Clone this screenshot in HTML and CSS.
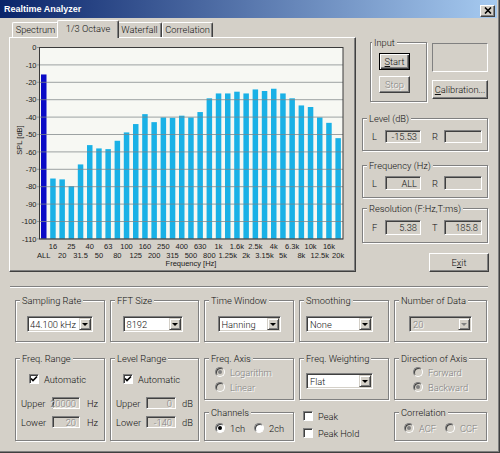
FILE: index.html
```html
<!DOCTYPE html>
<html>
<head>
  <meta charset="utf8" />
  <title>Realtime Analyzer</title>
  <link rel="stylesheet" href="styles.css">
</head>
<body>
  <div class="window">
    <div class="titlebar">
      <span class="titlebar__text">Realtime Analyzer</span>
      <span class="titlebar__close">
        <svg width="8" height="7" viewBox="0 0 8 7"><path d="M1 0.5 L7 6.5 M7 0.5 L1 6.5" stroke="#000" stroke-width="1.6"/></svg>
      </span>
    </div>
    <div class="client">
      <div class="top">
        <div class="tabctl">
          <div class="tabs">
            <div class="tab tab--spectrum">Spectrum</div>
            <div class="tab tab--active">1/3 Octave</div>
            <div class="tab tab--waterfall">Waterfall</div>
            <div class="tab tab--corr">Correlation</div>
          </div>
          <div class="tabpanel">
            <svg class="chart" width="345" height="233" viewBox="10 38 345 233"></svg>
          </div>
        </div>

        <div class="side">
          <div class="inputrow">
            <div class="group group--input">
              <span class="group__label">Input</span>
              <div class="btn btn--default btn--start"><u>S</u>tart</div>
              <div class="btn btn--disabled btn--stop">Stop</div>
            </div>
            <div class="inputrow__right">
              <div class="blank"></div>
              <div class="btn btn--calib"><u>C</u>alibration...</div>
            </div>
          </div>

          <div class="group group--level">
            <span class="group__label">Level (dB)</span>
            <div class="lr">
              <span class="lr__l">L</span>
              <div class="field field--l">-15.53</div>
              <span class="lr__r">R</span>
              <div class="field field--r"></div>
            </div>
          </div>

          <div class="group group--freq">
            <span class="group__label">Frequency (Hz)</span>
            <div class="lr">
              <span class="lr__l">L</span>
              <div class="field field--l">ALL</div>
              <span class="lr__r">R</span>
              <div class="field field--r"></div>
            </div>
          </div>

          <div class="group group--res">
            <span class="group__label">Resolution (F:Hz,T:ms)</span>
            <div class="lr">
              <span class="lr__l">F</span>
              <div class="field field--l">5.38</div>
              <span class="lr__r">T</span>
              <div class="field field--r">185.8</div>
            </div>
          </div>

          <div class="btn btn--exit">E<u>x</u>it</div>
        </div>
      </div>

      <div class="sep"></div>

      <div class="row1">
        <div class="group group--r1">
          <span class="group__label">Sampling Rate</span>
          <div class="combo combo--rate">44.100 kHz<span class="combo__btn"></span></div>
        </div>
        <div class="group group--r1">
          <span class="group__label">FFT Size</span>
          <div class="combo combo--fft">8192<span class="combo__btn"></span></div>
        </div>
        <div class="group group--r1">
          <span class="group__label">Time Window</span>
          <div class="combo combo--tw">Hanning<span class="combo__btn"></span></div>
        </div>
        <div class="group group--r1">
          <span class="group__label">Smoothing</span>
          <div class="combo combo--smooth">None<span class="combo__btn"></span></div>
        </div>
        <div class="group group--r1">
          <span class="group__label">Number of Data</span>
          <div class="combo combo--nod combo--disabled">20<span class="combo__btn"></span></div>
        </div>
      </div>

      <div class="row2">
        <div class="group group--range">
          <span class="group__label">Freq. Range</span>
          <div class="check check--fr"><span class="check__box check__box--on"><svg width="8" height="8" viewBox="0 0 8 8"><path d="M1 3.5 L3 5.5 L7 1.5" fill="none" stroke="#000" stroke-width="1.6"/></svg></span>Automatic</div>
          <div class="rng rng--first">
            <span class="rng__lbl">Upper</span>
            <div class="field field--dis field--fr">20000</div>
            <span class="rng__unit">Hz</span>
          </div>
          <div class="rng">
            <span class="rng__lbl">Lower</span>
            <div class="field field--dis field--fr">20</div>
            <span class="rng__unit">Hz</span>
          </div>
        </div>

        <div class="group group--range">
          <span class="group__label">Level Range</span>
          <div class="check check--lr"><span class="check__box check__box--on"><svg width="8" height="8" viewBox="0 0 8 8"><path d="M1 3.5 L3 5.5 L7 1.5" fill="none" stroke="#000" stroke-width="1.6"/></svg></span>Automatic</div>
          <div class="rng rng--first rng--lr">
            <span class="rng__lbl">Upper</span>
            <div class="field field--dis field--lvl">0</div>
            <span class="rng__unit">dB</span>
          </div>
          <div class="rng rng--lr">
            <span class="rng__lbl">Lower</span>
            <div class="field field--dis field--lvl">-140</div>
            <span class="rng__unit">dB</span>
          </div>
        </div>

        <div class="stack">
          <div class="group group--half">
            <span class="group__label">Freq. Axis</span>
            <div class="radio radio--dis radio--axis radio--first"><span class="radio__dot radio__dot--on"></span>Logarithm</div>
            <div class="radio radio--dis radio--axis"><span class="radio__dot"></span>Linear</div>
          </div>
          <div class="group group--low">
            <span class="group__label">Channels</span>
            <div class="radios">
              <div class="radio"><span class="radio__dot radio__dot--on"></span>1ch</div>
              <div class="radio radio--second"><span class="radio__dot"></span>2ch</div>
            </div>
          </div>
        </div>

        <div class="stack">
          <div class="group group--half">
            <span class="group__label">Freq. Weighting</span>
            <div class="combo combo--smooth combo--weight">Flat<span class="combo__btn"></span></div>
          </div>
          <div class="peaks">
            <div class="check"><span class="check__box"></span>Peak</div>
            <div class="check check--hold"><span class="check__box"></span>Peak Hold</div>
          </div>
        </div>

        <div class="stack">
          <div class="group group--half group--wide">
            <span class="group__label">Direction of Axis</span>
            <div class="radio radio--dis radio--dir radio--first"><span class="radio__dot"></span>Forward</div>
            <div class="radio radio--dis radio--dir"><span class="radio__dot radio__dot--on"></span>Backward</div>
          </div>
          <div class="group group--low group--wide">
            <span class="group__label">Correlation</span>
            <div class="radios radios--corr">
              <div class="radio radio--dis"><span class="radio__dot radio__dot--on"></span>ACF</div>
              <div class="radio radio--dis radio--second"><span class="radio__dot"></span>CCF</div>
            </div>
          </div>
        </div>
      </div>
    </div>
  </div>

  <script>
    const svg = document.querySelector('.chart');
    const NS = 'http://www.w3.org/2000/svg';
    // 1/3 octave levels, first one is the overall (ALL) level
    const vals = [-15.5,-75.3,-75.8,-79.7,-67.2,-56.1,-58,-58.4,-53.6,-48.8,-44,-38.3,-42.9,-40.2,-40.4,-39.2,-40.2,-37.1,-29.2,-26.4,-26.4,-25.4,-26.4,-24.1,-25,-23.7,-26.4,-29.2,-33.3,-34.2,-40.2,-43.3,-52.1];
    const bands = ['ALL','16','20','25','31.5','40','50','63','80','100','125','160','200','250','315','400','500','630','800','1k','1.25k','1.6k','2k','2.5k','3.15k','4k','5k','6.3k','8k','10k','12.5k','16k','20k'];

    function add(tag, attrs, text){
      const el = document.createElementNS(NS, tag);
      for (const k in attrs) el.setAttribute(k, attrs[k]);
      if (text) el.textContent = text;
      svg.appendChild(el);
      return el;
    }

    const top0 = 47.5, step = 17.4, bottom = 239;

    add('rect', {x: 39.5, y: top0, width: 303.5, height: bottom - top0, fill: '#f7f8f3'});

    vals.forEach((v, i) => {
      const y = top0 - v * step / 10;
      add('rect', {x: 41 + 9.2 * i, y: y, width: 5.5, height: bottom - y, fill: i === 0 ? '#0b0bc6' : '#1ab1e6'});
    });

    for (let k = 0; k <= 11; k++){
      const y = top0 + step * k;
      add('line', {x1: 37, x2: 343, y1: y, y2: y, stroke: '#7f8688', 'stroke-width': 1, opacity: 0.75});
      add('text', {x: 36.5, y: y + 2.6, 'text-anchor': 'end', class: 'chart__tick'}, k === 0 ? '0' : '-' + k * 10);
    }

    add('rect', {x: 39.5, y: top0, width: 303.5, height: bottom - top0, fill: 'none', stroke: '#3a3a3a'});

    bands.forEach((b, i) => {
      const x = 41 + 9.2 * i + 2.75;
      add('text', {x: x, y: i % 2 ? 248.7 : 257.7, 'text-anchor': 'middle', class: 'chart__tick'}, b);
    });

    add('text', {x: 191, y: 266, 'text-anchor': 'middle', class: 'chart__tick'}, 'Frequency  [Hz]');
    add('text', {x: 0, y: 0, 'text-anchor': 'middle', class: 'chart__tick', transform: 'translate(21.5 140) rotate(-90)'}, 'SPL [dB]');
  </script>
</body>
</html>
```

FILE: styles.css
```css
*{
  box-sizing: border-box;
}
body{
  margin: 0;
  background: #d4d0c8;
  font-family: Roboto, "Liberation Sans", Arial, sans-serif;
  font-size: 9.3px;
  font-weight: 300;
  line-height: 11px;
  color: #111;
}
u{
  text-decoration: underline;
}

.window{
  width: 500px;
  height: 453px;
  background: #d4d0c8;
  padding-right: 3px;
  box-shadow: inset -1px -1px 0 #404040, inset -2px -2px 0 #808080;
}

.titlebar{
  height: 18px;
  display: flex;
  align-items: center;
  justify-content: space-between;
  padding: 0 2px 0 4px;
  background: linear-gradient(90deg, #0a246a, #a6caf0);
  color: #fff;
  font-family: "Liberation Sans", Arial, sans-serif;
  font-size: 9px;
  font-weight: bold;
}
.titlebar__close{
  width: 15px;
  height: 12px;
  margin-top: 3px;
  display: flex;
  align-items: center;
  justify-content: center;
  background: #d4d0c8;
  border: 1px solid;
  border-color: #fff #404040 #404040 #fff;
  box-shadow: inset -1px -1px 0 #808080;
}

.client{
  padding: 2px 0 0 9px;
}

.top{
  display: flex;
  height: 252px;
}

/* tab control */
.tabctl{
  width: 347px;
}
.tabs{
  display: flex;
  align-items: flex-end;
  height: 17px;
  padding-left: 3px;
}
.tab{
  height: 15px;
  line-height: 13px;
  text-align: center;
  border: 1px solid;
  border-bottom: none;
  border-color: #fff #404040 #404040 #fff;
  border-radius: 2px 2px 0 0;
  box-shadow: inset -1px 0 0 #808080;
  background: #d4d0c8;
}
.tab--spectrum{
  width: 47px;
}
.tab--active{
  width: 62px;
  height: 18px;
  margin: 0 -2px -1px;
  line-height: 15px;
  position: relative;
  z-index: 1;
}
.tab--waterfall{
  width: 45px;
}
.tab--corr{
  width: 51px;
}
.tabpanel{
  width: 347px;
  height: 235px;
  border: 1px solid;
  border-color: #fff #404040 #404040 #fff;
  box-shadow: inset -1px -1px 0 #808080;
}
.chart{
  display: block;
}
.chart__tick{
  font-family: "Liberation Sans", Arial, sans-serif;
  font-size: 7.5px;
  fill: #1a1a1a;
}

/* group boxes */
.group{
  position: relative;
  border: 1px solid #808080;
  box-shadow: 1px 1px 0 #fff, inset 1px 1px 0 #fff;
}
.group__label{
  position: absolute;
  top: -6px;
  left: 4px;
  padding: 0 2px;
  background: #d4d0c8;
  white-space: nowrap;
}

/* buttons */
.btn{
  display: flex;
  align-items: center;
  justify-content: center;
  border: 1px solid;
  border-color: #fff #404040 #404040 #fff;
  box-shadow: inset -1px -1px 0 #808080;
  background: #d4d0c8;
  white-space: nowrap;
}
.btn--default{
  border-color: #000;
  box-shadow: inset 1px 1px 0 #fff, inset -1px -1px 0 #404040, inset -2px -2px 0 #808080;
}
.btn--disabled{
  color: #808080;
  text-shadow: 1px 1px 0 #fff;
}

/* right side */
.side{
  width: 126px;
  margin-left: 6px;
  padding-top: 22px;
}
.inputrow{
  display: flex;
  margin-left: 8px;
}
.group--input{
  width: 57px;
  height: 60px;
}
.group--input .group__label{
  left: 1px;
}
.btn--start{
  width: 31px;
  height: 17px;
  margin: 10px 0 0 8px;
}
.btn--stop{
  width: 31px;
  height: 17px;
  margin: 6px 0 0 8px;
}
.inputrow__right{
  width: 56px;
  margin-left: 5px;
}
.blank{
  height: 29px;
  margin-top: 1px;
  border: 1px solid;
  border-color: #808080 #fff #fff #808080;
}
.btn--calib{
  height: 19px;
  margin-top: 8px;
}

.group--level{
  height: 33px;
  margin-top: 16px;
}
.group--freq{
  height: 33px;
  margin-top: 14px;
}
.group--res{
  height: 35px;
  margin-top: 10px;
}
.lr{
  display: flex;
  align-items: center;
  padding: 11px 0 0 9px;
}
.group--freq .lr{
  padding-top: 10px;
}
.lr__l{
  width: 13px;
}
.lr__r{
  width: 12px;
  margin-left: 11px;
}
.field{
  height: 13px;
  display: flex;
  align-items: center;
  justify-content: flex-end;
  padding-right: 3px;
  background: #d4d0c8;
  border: 1px solid;
  border-color: #808080 #fff #fff #808080;
  box-shadow: inset 1px 1px 0 #404040;
}
.field--l{
  width: 36px;
}
.field--r{
  width: 38px;
}
.group--freq .field{
  height: 14px;
}
.group--res .field{
  height: 15px;
}
.field--dis{
  height: 12px;
  color: #808080;
  text-shadow: 1px 1px 0 #fff;
}
.btn--exit{
  width: 60px;
  height: 19px;
  margin: 10px 0 0 67px;
}

/* separator */
.sep{
  width: 478px;
  height: 2px;
  margin: 14px 0 0 1px;
  border-top: 1px solid #808080;
  border-bottom: 1px solid #fff;
}

/* bottom rows */
.row1,
.row2{
  display: grid;
  grid-template-columns: 90px 89px 90px 90px 93px;
  column-gap: 5px;
  margin-left: 6px;
}
.row1{
  margin-top: 12px;
}
.row2{
  margin-top: 16px;
  align-items: start;
}
.group--r1{
  height: 42px;
  display: flex;
  justify-content: center;
  padding-top: 15px;
}

.combo{
  position: relative;
  height: 16px;
  display: flex;
  align-items: center;
  padding-left: 3px;
  background: #fff;
  border: 1px solid;
  border-color: #808080 #fff #fff #808080;
  box-shadow: inset 1px 1px 0 #404040, inset -1px -1px 0 #d4d0c8;
}
.combo__btn{
  position: absolute;
  right: 1px;
  top: 1px;
  width: 12px;
  height: 12px;
  background: #d4d0c8;
  border: 1px solid;
  border-color: #d4d0c8 #404040 #404040 #d4d0c8;
  box-shadow: inset 1px 1px 0 #fff, inset -1px -1px 0 #808080;
}
.combo__btn::after{
  content: "";
  position: absolute;
  left: 2px;
  top: 4px;
  border-top: 3px solid #000;
  border-left: 3px solid transparent;
  border-right: 3px solid transparent;
}
.combo--rate{
  width: 66px;
  padding-left: 2px;
}
.combo--fft{
  width: 60px;
  margin-left: -4px;
}
.combo--tw{
  width: 63px;
}
.combo--smooth{
  width: 67px;
  margin-right: 9px;
}
.combo--nod{
  width: 63px;
}
.combo--disabled{
  background: #d4d0c8;
  color: #808080;
  text-shadow: 1px 1px 0 #fff;
}
.combo--disabled .combo__btn::after{
  border-top-color: #808080;
}
.group--half .combo--weight{
  margin: 14px 0 0 6px;
}

.group--range{
  height: 83px;
}
.group--half{
  height: 42px;
}
.group--low{
  height: 29px;
  margin-top: 12px;
}
.stack{
  display: flex;
  flex-direction: column;
}

/* checkboxes */
.check{
  display: flex;
  align-items: center;
  height: 10px;
}
.check__box{
  width: 10px;
  height: 10px;
  margin-right: 5px;
  display: flex;
  align-items: center;
  justify-content: center;
  background: #fff;
  border: 1px solid;
  border-color: #808080 #fff #fff #808080;
  box-shadow: inset 1px 1px 0 #404040;
}
.check--fr{
  margin: 15px 0 0 13px;
}
.check--lr{
  margin: 15px 0 0 12px;
}
.rng{
  display: flex;
  align-items: center;
  margin: 7px 0 0 5px;
}
.rng--first{
  margin-top: 13px;
}
.rng__lbl{
  width: 31px;
}
.rng--lr .rng__lbl{
  width: 30px;
}
.field--fr{
  width: 28px;
}
.field--lvl{
  width: 30px;
}
.rng__unit{
  margin-left: 7px;
}
.rng--lr .rng__unit{
  margin-left: 6px;
}

/* radios */
.radio{
  display: flex;
  align-items: center;
  height: 10px;
}
.radio--dis{
  color: #808080;
  text-shadow: 1px 1px 0 #fff;
}
.radio__dot{
  width: 10px;
  height: 10px;
  margin-right: 5px;
  border-radius: 50%;
  display: flex;
  align-items: center;
  justify-content: center;
  background: #fff;
  border: 1px solid;
  border-color: #808080 #fff #fff #808080;
  box-shadow: inset 1px 1px 0 #404040;
}
.radio--dis .radio__dot{
  background: #d4d0c8;
}
.radio__dot--on::after{
  content: "";
  width: 4px;
  height: 4px;
  border-radius: 50%;
  background: #000;
}
.radio--dis .radio__dot--on::after{
  background: #808080;
}
.radio--axis{
  margin: 5px 0 0 10px;
}
.radio--dir{
  margin: 5px 0 0 18px;
}
.radio--first{
  margin-top: 8px;
}
.radios{
  display: flex;
  padding: 10px 0 0 10px;
}
.radios--corr{
  padding-left: 9px;
}
.radio--second{
  margin-left: 9px;
}

.peaks{
  margin: 11px 0 0 4px;
}
.check--hold{
  margin-top: 7px;
}
```
